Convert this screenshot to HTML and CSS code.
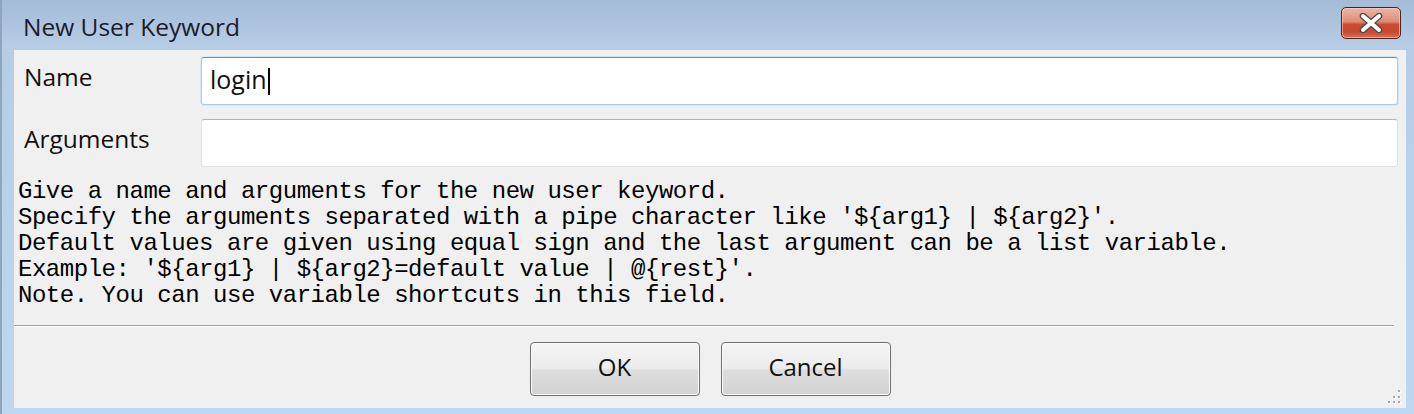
FILE: index.html
```html
<!DOCTYPE html>
<html>
<head>
<meta charset="utf-8">
<link rel="stylesheet" href="styles.css">
</head>
<body>
<div class="window">
  <div class="titlebar">
    <div class="title">New User Keyword</div>
    <div class="close">
      <svg width="24" height="20" viewBox="0 0 24 20">
        <path d="M4 3 L20 17 M20 3 L4 17" stroke="#4a4a4a" stroke-width="6.5" stroke-linecap="round"/>
        <path d="M4 3 L20 17 M20 3 L4 17" stroke="#ffffff" stroke-width="4" stroke-linecap="round"/>
      </svg>
    </div>
  </div>
  <div class="panel">
    <div class="form">
      <label class="label">Name</label>
      <div class="input focused"><span class="value">login</span><span class="caret"></span></div>
      <label class="label">Arguments</label>
      <div class="input"></div>
    </div>
    <pre class="help">Give a name and arguments for the new user keyword.
Specify the arguments separated with a pipe character like '${arg1} | ${arg2}'.
Default values are given using equal sign and the last argument can be a list variable.
Example: '${arg1} | ${arg2}=default value | @{rest}'.
Note. You can use variable shortcuts in this field.</pre>
    <div class="separator"></div>
    <div class="buttons">
      <div class="button">OK</div>
      <div class="button">Cancel</div>
    </div>
    <div class="grip">
      <svg width="16" height="16" viewBox="0 0 16 16">
        <g fill="#ffffff">
          <rect x="13" y="2" width="2" height="2"/>
          <rect x="8" y="8" width="2" height="2"/><rect x="13" y="8" width="2" height="2"/>
          <rect x="3" y="13" width="2" height="2"/><rect x="8" y="13" width="2" height="2"/><rect x="13" y="13" width="2" height="2"/>
        </g>
        <g fill="#a8a8a8">
          <rect x="12" y="1" width="2" height="2"/>
          <rect x="7" y="7" width="2" height="2"/><rect x="12" y="7" width="2" height="2"/>
          <rect x="2" y="12" width="2" height="2"/><rect x="7" y="12" width="2" height="2"/><rect x="12" y="12" width="2" height="2"/>
        </g>
      </svg>
    </div>
  </div>
</div>
</body>
</html>
```

FILE: styles.css
```css
html, body {
  margin: 0;
  padding: 0;
}
body {
  width: 1414px;
  height: 414px;
  overflow: hidden;
  background: #bcd3ec;
}
.window {
  width: 1414px;
  height: 414px;
  box-sizing: border-box;
  border-left: 2px solid #8fa5bd;
  background: linear-gradient(to bottom, #a4bbd6 0px, #b6cce5 45px, #bad1ea 180px, #bfd6ef 414px);
  display: flex;
  flex-direction: column;
}
.titlebar {
  height: 50px;
  display: flex;
  align-items: center;
  justify-content: space-between;
  padding: 0 13px 0 21px;
  flex: none;
}
.title {
  font-family: "Open Sans", "Noto Sans", sans-serif;
  font-size: 24.5px;
  color: #1b1b2e;
  margin-top: 2px;
}
.close {
  width: 58px;
  height: 30px;
  border: 1px solid #4a2420;
  border-radius: 5px;
  background: linear-gradient(to bottom, #eab5a8 0%, #df8d78 45%, #c94b33 55%, #c7482f 80%, #d8735a 100%);
  box-shadow: inset 0 0 0 1px rgba(255, 210, 200, 0.6);
  display: flex;
  align-items: center;
  justify-content: center;
  margin-top: -4px;
}
.panel {
  position: relative;
  flex: 1;
  margin: 0 8px 6px 12px;
  background: #f0f0f0;
  display: flex;
  flex-direction: column;
}
.form {
  display: grid;
  grid-template-columns: 187px 1fr;
  row-gap: 14px;
  padding: 7px 8px 0 0;
  align-items: center;
}
.label {
  font-family: "Open Sans", "Noto Sans", sans-serif;
  font-size: 24.5px;
  color: #111;
  padding-left: 10px;
  margin-top: -10px;
}
.input {
  height: 48px;
  box-sizing: border-box;
  background: #fff;
  border: 1px solid #dfe3e8;
  border-top-color: #b0b2b6;
  border-radius: 3px;
  display: flex;
  align-items: center;
  padding-left: 8px;
}
.input.focused {
  border: 1px solid #a9cbe6;
  border-top-color: #5c93c4;
  box-shadow: 0 0 0 1px #d6e8f6;
}
.value {
  font-family: "Open Sans", "Noto Sans", sans-serif;
  font-size: 25px;
  color: #111;
  margin-top: -4px;
}
.caret {
  width: 2px;
  height: 27px;
  background: #000;
  margin-left: 1px;
}
.help {
  margin: 12px 0 0 4px;
  font-family: "Liberation Mono", monospace;
  font-size: 24px;
  letter-spacing: -0.47px;
  line-height: 26px;
  color: #000;
}
.separator {
  margin: 16px 12px 0 0;
  height: 1px;
  background: #a0a0a0;
  border-bottom: 1px solid #ffffff;
}
.buttons {
  display: flex;
  justify-content: center;
  gap: 21px;
  margin-top: 15px;
}
.button {
  width: 170px;
  height: 54px;
  box-sizing: border-box;
  border: 1px solid #707070;
  border-radius: 4px;
  background: linear-gradient(to bottom, #f4f4f4 0%, #ececec 48%, #dedede 52%, #d2d2d2 100%);
  box-shadow: inset 0 0 0 1px #fbfbfb;
  display: flex;
  align-items: center;
  justify-content: center;
  font-family: "Open Sans", "Noto Sans", sans-serif;
  font-size: 24px;
  color: #111;
  padding-bottom: 5px;
}
.grip {
  position: absolute;
  right: 4px;
  bottom: 3px;
  width: 16px;
  height: 16px;
}
```
